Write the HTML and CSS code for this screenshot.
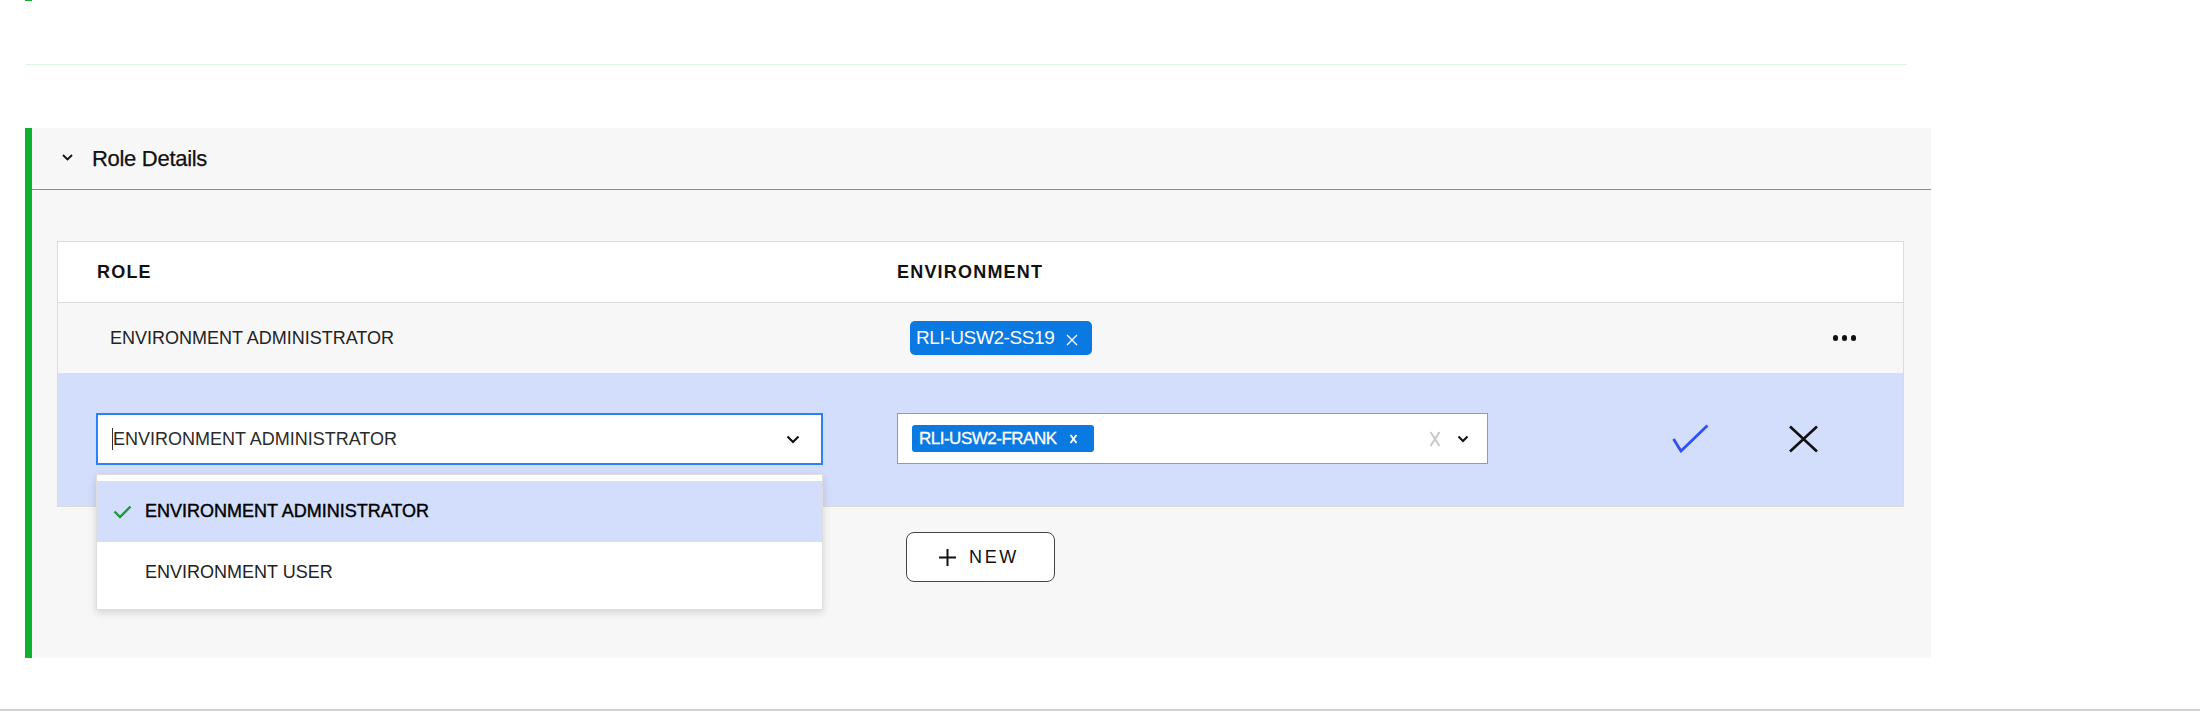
FILE: index.html
```html
<!DOCTYPE html>
<html>
<head>
<meta charset="utf-8">
<link rel="stylesheet" href="styles.css">
</head>
<body>
<div class="prev-tail"></div>
<div class="divider"></div>
<section class="panel">
  <div class="panel-header">
    <svg class="hdr-chevron" width="11" height="7" viewBox="0 0 11 7"><polyline points="1,1 5.5,5.5 10,1" fill="none" stroke="#111" stroke-width="1.8"/></svg>
    <span class="panel-title">Role Details</span>
  </div>
  <div class="panel-body">
    <div class="table">
      <div class="row head-row">
        <div class="col-role">ROLE</div>
        <div class="col-env">ENVIRONMENT</div>
      </div>
      <div class="row data-row">
        <div class="col-role"><span class="cell-text">ENVIRONMENT ADMINISTRATOR</span></div>
        <div class="col-env">
          <span class="tag tag-lg">RLI-USW2-SS19<svg class="tag-x" width="12" height="12" viewBox="0 0 12 12"><path d="M1 1L11 11M11 1L1 11" stroke="#fff" stroke-width="1.4"/></svg></span>
        </div>
        <div class="more"><span></span><span></span><span></span></div>
      </div>
      <div class="row edit-row">
        <div class="col-role">
          <div class="select-wrap">
            <div class="select focused">
              <span class="caret"></span><span class="select-text">ENVIRONMENT ADMINISTRATOR</span>
              <svg class="sel-chevron" width="14" height="9" viewBox="0 0 14 9"><polyline points="1.5,1.5 7,7 12.5,1.5" fill="none" stroke="#111" stroke-width="2.2"/></svg>
            </div>
            <div class="dropdown">
              <div class="option selected">
                <svg class="opt-check" width="19" height="14" viewBox="0 0 19 14"><polyline points="1.5,6.5 7,12 17.5,1.5" fill="none" stroke="#1d9a3a" stroke-width="2.4"/></svg>
                <span class="opt-text">ENVIRONMENT ADMINISTRATOR</span>
              </div>
              <div class="option">
                <span class="opt-text">ENVIRONMENT USER</span>
              </div>
            </div>
          </div>
        </div>
        <div class="col-env edit-env">
          <div class="multi">
            <span class="tag tag-sm">RLI-USW2-FRANK<svg class="tag-x-sm" width="9" height="11" viewBox="0 0 9 11"><path d="M1.5 2L7.5 10M7.5 2L1.5 10" stroke="#fff" stroke-width="1.9"/></svg></span>
            <svg class="clear-x" width="12" height="16" viewBox="0 0 12 16"><path d="M1.5 1L10.5 15M10.5 1L1.5 15" stroke="#c8c8c8" stroke-width="2"/></svg>
            <svg class="multi-chevron" width="12" height="8" viewBox="0 0 12 8"><polyline points="1.5,1.5 6,6 10.5,1.5" fill="none" stroke="#111" stroke-width="2"/></svg>
          </div>
          <svg class="act-check" width="37" height="29" viewBox="0 0 37 29"><polyline points="1.5,15 9,27 35.5,1.5" fill="none" stroke="#2f52f2" stroke-width="2.8"/></svg>
          <svg class="act-x" width="31" height="28" viewBox="0 0 31 28"><path d="M2 1.5L29 26.5M29 1.5L2 26.5" stroke="#111" stroke-width="2.6"/></svg>
        </div>
      </div>
    </div>
    <div class="new-row">
      <button class="btn-new"><svg width="19" height="19" viewBox="0 0 19 19"><path d="M9.5 1V18M1 9.5H18" stroke="#111" stroke-width="2"/></svg><span>NEW</span></button>
    </div>
  </div>
</section>
<div class="bottom-line"></div>
</body>
</html>
```

FILE: styles.css
```css
* { box-sizing: border-box; }
html, body { margin: 0; padding: 0; background: #ffffff; }
body {
  font-family: "Liberation Sans", Arial, sans-serif;
  color: #111;
  width: 2200px;
  height: 725px;
  overflow: hidden;
}

.prev-tail {
  margin-left: 25px;
  width: 7px;
  height: 1px;
  background: #0db12d;
}

.divider {
  margin-top: 63px;
  margin-left: 25px;
  width: 1882px;
  height: 1px;
  background: #dff5e3;
}

.panel {
  margin-top: 63px;
  margin-left: 25px;
  width: 1906px;
  height: 530px;
  background: #f7f7f7;
  border-left: 7px solid #0db12d;
  display: flex;
  flex-direction: column;
}

.panel-header {
  height: 62px;
  border-bottom: 1.5px solid #33c255;
  display: flex;
  align-items: center;
  padding-left: 30px;
}
.hdr-chevron { margin-top: -3px; }
.panel-title {
  margin-left: 19px;
  font-size: 22px;
  color: #111;
  letter-spacing: -0.3px;
  -webkit-text-stroke: 0.25px #111;
}

.panel-body {
  padding: 51px 27px 0 25px;
}

.table {
  border: 1px solid #dcdcd8;
  border-bottom: 1.5px solid #dcdcd8;
}

.row {
  display: flex;
  align-items: center;
  padding-left: 38px;
}
.col-role { width: 801px; flex: none; }
.col-env { flex: 1; display: flex; align-items: center; }

.head-row {
  height: 61px;
  background: #fff;
  border-bottom: 1.5px solid #dcdcd8;
  font-weight: bold;
  font-size: 18px;
  letter-spacing: 1.2px;
  color: #111;
}
.head-row .col-role { padding-left: 1px; }

.data-row {
  height: 70px;
  background: #f7f7f7;
}
.cell-text {
  padding-left: 14px;
  font-size: 18px;
  color: #222;
}
.data-row .col-env { padding-left: 13px; }

.tag {
  display: inline-flex;
  align-items: center;
  background: #0b79e2;
  color: #fff;
  border-radius: 5px;
}
.tag-lg {
  height: 34px;
  width: 182px;
  padding-left: 6px;
  font-size: 19px;
  letter-spacing: -0.4px;
}
.tag-x { margin-left: 12px; margin-top: 3px; }

.more {
  display: flex;
  gap: 3.5px;
  margin-right: 47px;
}
.more span {
  width: 5.5px;
  height: 5.5px;
  border-radius: 50%;
  background: #111;
}

.edit-row {
  height: 133px;
  background: #d3defc;
  align-items: flex-start;
  padding-top: 40px;
}

.select-wrap {
  position: relative;
  width: 727px;
}
.select {
  height: 52px;
  background: #fff;
  border: 2px solid #2e80f8;
  display: flex;
  align-items: center;
  padding-left: 14px;
  padding-right: 21px;
}
.caret {
  width: 1px;
  height: 22px;
  background: #333;
}
.select-text {
  font-size: 18px;
  color: #2a2a2a;
  flex: 1;
}
.sel-chevron { flex: none; }

.dropdown {
  position: absolute;
  top: calc(100% + 9px);
  left: 0;
  width: 727px;
  background: #fff;
  border: 1px solid #dedede;
  box-shadow: 0 3px 8px rgba(0, 0, 0, 0.14);
  padding: 6px 0 7px;
  z-index: 10;
}
.option {
  height: 60px;
  display: flex;
  align-items: center;
  padding-left: 48px;
  position: relative;
}
.option.selected {
  background: #d3defc;
  height: 61px;
}
.opt-check {
  position: absolute;
  left: 16px;
  top: 24px;
}
.opt-text {
  font-size: 18px;
  color: #222;
}
.option.selected .opt-text {
  color: #000;
  -webkit-text-stroke: 0.4px #000;
}

.edit-env { align-items: flex-start; }
.multi {
  width: 591px;
  height: 51px;
  background: #fff;
  border: 1px solid #9a9a9a;
  display: flex;
  align-items: center;
  padding-left: 14px;
  padding-right: 18px;
}
.tag-sm {
  height: 27px;
  width: 182px;
  border-radius: 3px;
  padding-left: 7px;
  font-size: 17px;
  -webkit-text-stroke: 0.3px #fff;
  letter-spacing: -0.5px;
}
.tag-x-sm { margin-left: 12px; }
.clear-x { margin-left: auto; }
.multi-chevron { margin-left: 16px; }

.act-check { margin-left: 184px; margin-top: 11px; }
.act-x { margin-left: 79px; margin-top: 12px; }

.new-row {
  padding-left: 849px;
  margin-top: 25px;
}
.btn-new {
  width: 149px;
  height: 50px;
  background: #fff;
  border: 1px solid #444;
  border-radius: 8px;
  display: flex;
  align-items: center;
  justify-content: center;
  gap: 12px;
  font-family: "Liberation Sans", Arial, sans-serif;
  font-size: 18px;
  letter-spacing: 2.6px;
  color: #111;
  padding: 0 4px 0 0;
}

.bottom-line {
  margin-top: 51px;
  width: 2200px;
  height: 2px;
  background: #d2d2d2;
}
```
